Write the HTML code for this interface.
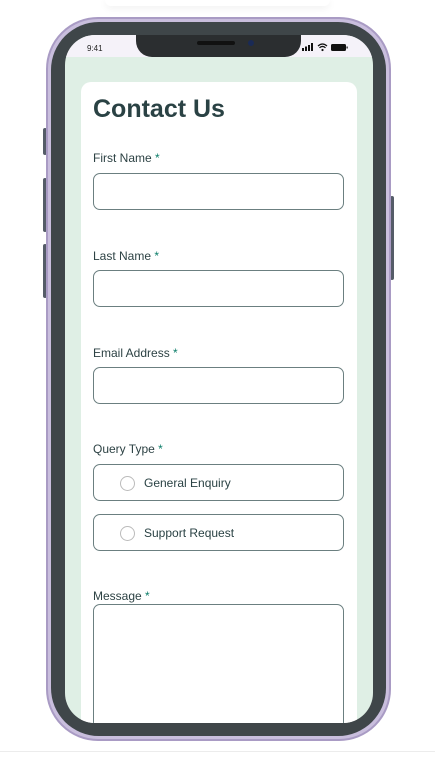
<!DOCTYPE html><html><head><style>
*{margin:0;padding:0;box-sizing:border-box}
html,body{width:435px;height:762px;overflow:hidden}
body{background:#fff;position:relative;font-family:"Liberation Sans",sans-serif;color:#2a4244}
.abs{position:absolute}
.phone{left:46px;top:17px;width:345px;height:724px;border-radius:52px;background:#c9bedd;border:2px solid #a99bc4}
.bezel{left:51px;top:22px;width:335px;height:714px;border-radius:48px;background:#3f4649}
.screen{left:65px;top:35px;width:308px;height:688px;border-radius:30px;background:#dfefe5;overflow:hidden}
.status{left:0;top:0;width:308px;height:22px;background:#f5f2f9}
.notch{left:71px;top:0;width:165px;height:22px;background:#2b2e30;border-radius:0 0 16px 16px}
.card{left:16px;top:47px;width:276px;height:660px;background:#fff;border-radius:10px}
.lab{font-size:12px;color:#2d4244;left:12px}
.lab b{color:#0c7d69;font-weight:normal}
.inp{left:12px;width:251px;height:37px;border:1px solid #6b7f80;border-radius:7px}
.rad{left:12px;width:251px;height:37px;border:1px solid #6b7f80;border-radius:7px;font-size:12px;padding:11px 0 0 50px}
.rad:before{content:"";position:absolute;left:26px;top:11px;width:13px;height:13px;border:1px solid #bbb;border-radius:50%}
</style></head><body>
<div class="abs" style="left:105px;top:0;width:225px;height:6px;box-shadow:0 2px 8px #eee;border-radius:0 0 20px 20px"></div>
<div class="abs" style="left:43px;top:128px;width:4px;height:27px;background:#555c68;border-radius:2px"></div>
<div class="abs" style="left:43px;top:178px;width:4px;height:54px;background:#555c68;border-radius:2px"></div>
<div class="abs" style="left:43px;top:244px;width:4px;height:54px;background:#555c68;border-radius:2px"></div>
<div class="abs" style="left:390px;top:196px;width:4px;height:84px;background:#555c68;border-radius:2px"></div>
<div class="abs phone"></div>
<div class="abs bezel"></div>
<div class="abs screen">
 <div class="abs status"></div>
 <div class="abs" style="left:22px;top:9px;font-size:8px;color:#222">9:41</div>
 <div class="abs notch"></div>
 <div class="abs" style="left:132px;top:6px;width:38px;height:4px;background:#111;border-radius:2px"></div>
 <div class="abs" style="left:183px;top:5px;width:6px;height:6px;background:#1a2a55;border-radius:50%"></div>
 <svg class="abs" style="left:237px;top:7px" width="50" height="10" viewBox="0 0 50 10">
  <rect x="0" y="6" width="2" height="3" fill="#111"/><rect x="3" y="4.5" width="2" height="4.5" fill="#111"/><rect x="6" y="3" width="2" height="6" fill="#111"/><rect x="9" y="1" width="2" height="8" fill="#111"/>
  <path d="M16 4 Q20.5 0 25 4 M17.5 5.8 Q20.5 3 23.5 5.8" stroke="#111" stroke-width="1.3" fill="none"/><circle cx="20.5" cy="8" r="1.1" fill="#111"/>
  <rect x="29" y="2" width="15" height="7" rx="1.5" fill="#111"/><rect x="44.5" y="4.5" width="1.2" height="2" fill="#111"/>
 </svg>
 <div class="abs card">
  <div class="abs" style="left:12px;top:13px;font-size:25px;font-weight:bold;color:#2a4244">Contact Us</div>
  <div class="abs lab" style="top:69px">First Name <b>*</b></div>
  <div class="abs inp" style="top:91px"></div>
  <div class="abs lab" style="top:167px">Last Name <b>*</b></div>
  <div class="abs inp" style="top:188px"></div>
  <div class="abs lab" style="top:264px">Email Address <b>*</b></div>
  <div class="abs inp" style="top:285px"></div>
  <div class="abs lab" style="top:360px">Query Type <b>*</b></div>
  <div class="abs rad" style="top:382px">General Enquiry</div>
  <div class="abs rad" style="top:432px">Support Request</div>
  <div class="abs lab" style="top:507px">Message <b>*</b></div>
  <div class="abs inp" style="top:522px;height:130px"></div>
 </div>
</div>
<div class="abs" style="left:0;top:751px;width:435px;height:1px;background:#ececec"></div>
</body></html>
